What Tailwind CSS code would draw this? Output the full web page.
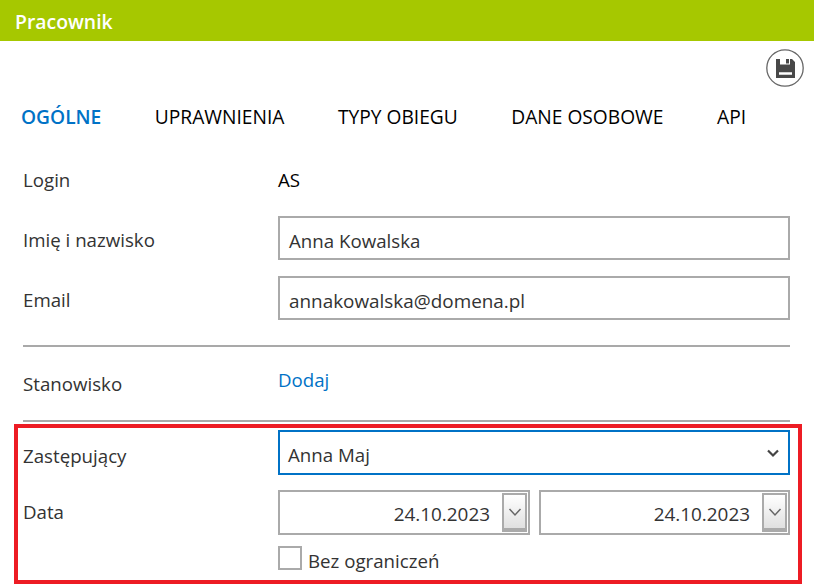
<!DOCTYPE html>
<html><head><meta charset="utf-8"><script src="https://cdn.jsdelivr.net/npm/@tailwindcss/browser@4"></script></head>
<body class="bg-white font-['Open_Sans',sans-serif] text-[18.700px] text-[#333] overflow-hidden">
<div class="w-[814px] h-[587px] overflow-hidden">
<header class="h-[41px] bg-[#a6c800] flex items-center pl-[15px] pt-[2px] text-white text-[19.400px] font-semibold">Pracownik</header>
<div class="h-[53px] flex justify-end items-start pt-[8px] pr-[10px]">
<svg width="38" height="38" viewBox="0 0 38 38" fill="none"><circle cx="19" cy="19" r="18.200" stroke="#666" stroke-width="1.300"/><path fill-rule="evenodd" fill="#484848" d="M10 10H14V15.500H24V10H26L29 13V29H10ZM20 10H23V14.500H20ZM13 23.300V25.700H26V23.300Z"/></svg>
</div>
<nav class="h-[46px] flex items-center pl-[21px] gap-[53.500px] text-black text-[19.200px]">
<span class="text-[#0072c6] font-semibold">OGÓLNE</span><span>UPRAWNIENIA</span><span>TYPY OBIEGU</span><span>DANE OSOBOWE</span><span>API</span>
</nav>
<div class="pl-[23px] pr-[24px]">
<div class="flex items-center h-[42px] mt-[19px]"><span class="w-[255px]">Login</span><span class="text-black">AS</span></div>
<div class="flex items-center h-[44px] mt-[15px]"><span class="w-[255px] pt-[4px]">Imię i nazwisko</span><div class="flex-1 h-full border-2 border-[#aaa] flex items-center pl-[9px] pt-[6px]">Anna Kowalska</div></div>
<div class="flex items-center h-[44px] mt-[16px]"><span class="w-[255px] pt-[4px]">Email</span><div class="flex-1 h-full border-2 border-[#aaa] flex items-center pl-[9px] pt-[6px] text-[18.900px]">annakowalska@domena.pl</div></div>
<div class="h-[2px] bg-[#a9a9a9] mt-[25px]"></div>
<div class="flex items-center h-[72px] pb-[2px]"><span class="w-[255px] pt-[4px]">Stanowisko</span><span class="text-[#0072c6] pb-[4px]">Dodaj</span></div>
<div class="h-[2px] bg-[#a9a9a9] mt-[1px]"></div>
</div>
<section class="ml-[14px] mt-[2px] h-[160px] border-4 border-[#ed1c24] w-[788px] pl-[5px] pt-[2px]">
<div class="flex items-center h-[45px]"><span class="w-[255px] pt-[7px]">Zastępujący</span>
<div class="w-[512px] h-full border-2 border-[#0072c6] flex items-center justify-between pl-[8px] pr-[8px] pt-[6px]">Anna Maj
<svg width="14" height="10" viewBox="0 0 14 10" fill="none" class="-mt-[6px]"><path d="M2 2.500L7 7.500L12 2.500" stroke="#444" stroke-width="2.200"/></svg></div></div>
<div class="flex items-start h-[45px] mt-[15px]"><span class="w-[255px] pt-[8px]">Data</span>
<div class="flex gap-[9px] text-[18.900px]">
<div class="w-[252px] h-[45px] border-2 border-[#aaa] flex items-center justify-end pr-[1px]"><span class="mr-[12px] pt-[4px]">24.10.2023</span><span class="w-[25px] h-[39px] border-2 border-b-4 border-[#aaa] bg-gradient-to-b from-white to-[#e0e0e0] flex items-center justify-center"><svg width="14" height="10" viewBox="0 0 14 10" fill="none"><path d="M1.500 2L7 8L12.500 2" stroke="#666" stroke-width="1.500"/></svg></span></div>
<div class="w-[251px] h-[45px] border-2 border-[#aaa] flex items-center justify-end pr-[1px]"><span class="mr-[12px] pt-[4px]">24.10.2023</span><span class="w-[25px] h-[39px] border-2 border-b-4 border-[#aaa] bg-gradient-to-b from-white to-[#e0e0e0] flex items-center justify-center"><svg width="14" height="10" viewBox="0 0 14 10" fill="none"><path d="M1.500 2L7 8L12.500 2" stroke="#666" stroke-width="1.500"/></svg></span></div>
</div></div>
<div class="flex items-center h-[24px] mt-[11px] ml-[255px] gap-[6px]"><span class="w-[24px] h-[24px] border-2 border-[#aaa]"></span><span class="pt-[6px]">Bez ograniczeń</span></div>
</section>
</div>
</body></html>
